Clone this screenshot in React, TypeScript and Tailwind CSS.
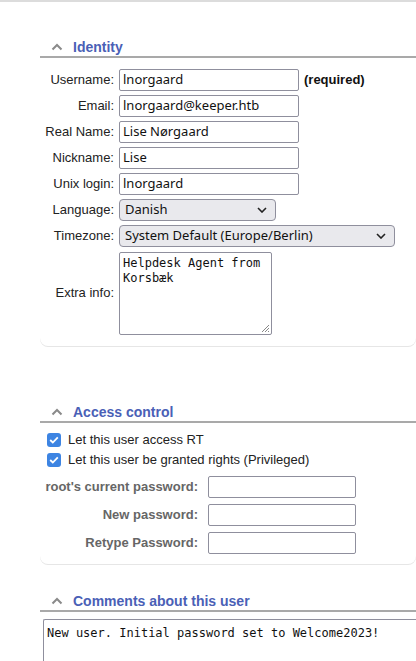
import React from "react"

const labelFont = { fontFamily: '"Liberation Sans", Arial, sans-serif' }

function Chevron() {
  return (
    <svg width="12" height="8" viewBox="0 0 12 8" className="shrink-0">
      <polyline points="1.5,6.5 6,2 10.5,6.5" fill="none" stroke="#8a8a8a" strokeWidth="2" />
    </svg>
  )
}

function SectionHeader({ title }: { title: string }) {
  return (
    <div className="flex items-center h-[22px] border-b-2 border-[#a9a9a9] pl-[11px] gap-[10px] pt-[1px]">
      <Chevron />
      <span className="text-[14px] font-bold text-[#4a60b6] leading-none">{title}</span>
    </div>
  )
}

function TextInput({ value, width }: { value: string; width: string }) {
  return (
    <div
      className={`h-[22px] ${width} border border-[#8f8f9d] rounded-[2px] bg-white px-[3px] flex items-center text-[13px] text-[#111] whitespace-nowrap`}
      style={{ fontFamily: '"Noto Sans", sans-serif' }}
    >
      {value}
    </div>
  )
}

function Select({ value, width }: { value: string; width: string }) {
  return (
    <div
      className={`h-[22px] ${width} border border-[#8f8f9d] rounded-[4px] bg-[#e9e9ed] pl-[5px] pr-[8px] flex items-center justify-between text-[13px] text-[#111]`}
      style={{ fontFamily: '"Noto Sans", sans-serif' }}
    >
      <span>{value}</span>
      <svg width="10" height="6" viewBox="0 0 10 6">
        <polyline points="1,1 5,5 9,1" fill="none" stroke="#222" strokeWidth="1.6" />
      </svg>
    </div>
  )
}

function Row({ label, children }: { label: string; children: React.ReactNode }) {
  return (
    <div className="flex items-center gap-[5px]">
      <div className="w-[74px] text-right text-[13px] text-[#222] whitespace-nowrap" style={labelFont}>
        {label}
      </div>
      {children}
    </div>
  )
}

function PwRow({ label }: { label: string }) {
  return (
    <div className="flex items-center gap-[10px]">
      <div className="w-[158px] text-right text-[13px] font-bold text-[#666] whitespace-nowrap" style={labelFont}>
        {label}
      </div>
      <div className="h-[22px] w-[148px] border border-[#8f8f9d] rounded-[2px] bg-white" />
    </div>
  )
}

function Check({ label }: { label: string }) {
  return (
    <label className="flex items-center gap-[7px] h-[20px] pl-[7px] text-[13px] text-[#222]" style={labelFont}>
      <span className="w-[14px] h-[14px] rounded-[3px] bg-[#3d84e2] flex items-center justify-center">
        <svg width="10" height="8" viewBox="0 0 10 8">
          <polyline points="1.2,4 3.8,6.5 8.8,1.3" fill="none" stroke="#fff" strokeWidth="1.8" />
        </svg>
      </span>
      {label}
    </label>
  )
}

export default function App() {
  return (
    <div className="w-[416px] h-[661px] overflow-hidden bg-white" style={labelFont}>
      <div className="h-[2px] bg-[#dcdcdc]" />

      <div className="pl-[40px]">
        {/* Identity */}
        <div className="mt-[34px] rounded-b-lg shadow-[0_1px_0_#e6e6e6] pb-[11px]">
          <SectionHeader title="Identity" />
          <div className="flex flex-col gap-[4px] mt-[11px]">
            <Row label="Username:">
              <TextInput value="lnorgaard" width="w-[180px]" />
              <span className="text-[13px] font-bold text-[#111]">(required)</span>
            </Row>
            <Row label="Email:">
              <TextInput value="lnorgaard@keeper.htb" width="w-[180px]" />
            </Row>
            <Row label="Real Name:">
              <TextInput value="Lise Nørgaard" width="w-[180px]" />
            </Row>
            <Row label="Nickname:">
              <TextInput value="Lise" width="w-[180px]" />
            </Row>
            <Row label="Unix login:">
              <TextInput value="lnorgaard" width="w-[180px]" />
            </Row>
            <Row label="Language:">
              <Select value="Danish" width="w-[157px]" />
            </Row>
            <Row label="Timezone:">
              <Select value="System Default (Europe/Berlin)" width="w-[276px]" />
            </Row>
            <Row label="Extra info:">
              <div className="relative h-[83px] w-[153px] border border-[#8f8f9d] rounded-[2px] bg-white px-[3px] pt-[3px] text-[12px] leading-[15px] text-[#111] font-['DejaVu_Sans_Mono',monospace] mt-[1px]">
                Helpdesk Agent from
                <br />
                Korsbæk
                <svg width="10" height="10" viewBox="0 0 10 10" className="absolute right-[1px] bottom-[1px]">
                  <line x1="9" y1="2" x2="2" y2="9" stroke="#888" strokeWidth="1" />
                  <line x1="9" y1="5" x2="5" y2="9" stroke="#888" strokeWidth="1" />
                  <line x1="9" y1="8" x2="8" y2="9" stroke="#888" strokeWidth="1" />
                </svg>
              </div>
            </Row>
          </div>
        </div>

        {/* Access control */}
        <div className="mt-[55px] rounded-b-lg shadow-[0_1px_0_#e6e6e6] pb-[10px]">
          <SectionHeader title="Access control" />
          <div className="mt-[7px] flex flex-col">
            <Check label="Let this user access RT" />
            <Check label="Let this user be granted rights (Privileged)" />
          </div>
          <div className="mt-[6px] flex flex-col gap-[6px]">
            <PwRow label="root's current password:" />
            <PwRow label="New password:" />
            <PwRow label="Retype Password:" />
          </div>
        </div>

        {/* Comments */}
        <div className="mt-[26px]">
          <SectionHeader title="Comments about this user" />
          <div className="mt-[7px] ml-[3px] h-[60px] border border-r-0 border-[#8f8f9d] rounded-l-[2px] bg-white px-[3px] pt-[4px] text-[12px] text-[#111] font-['DejaVu_Sans_Mono',monospace] whitespace-nowrap">
            New user. Initial password set to Welcome2023!
          </div>
        </div>
      </div>
    </div>
  )
}
